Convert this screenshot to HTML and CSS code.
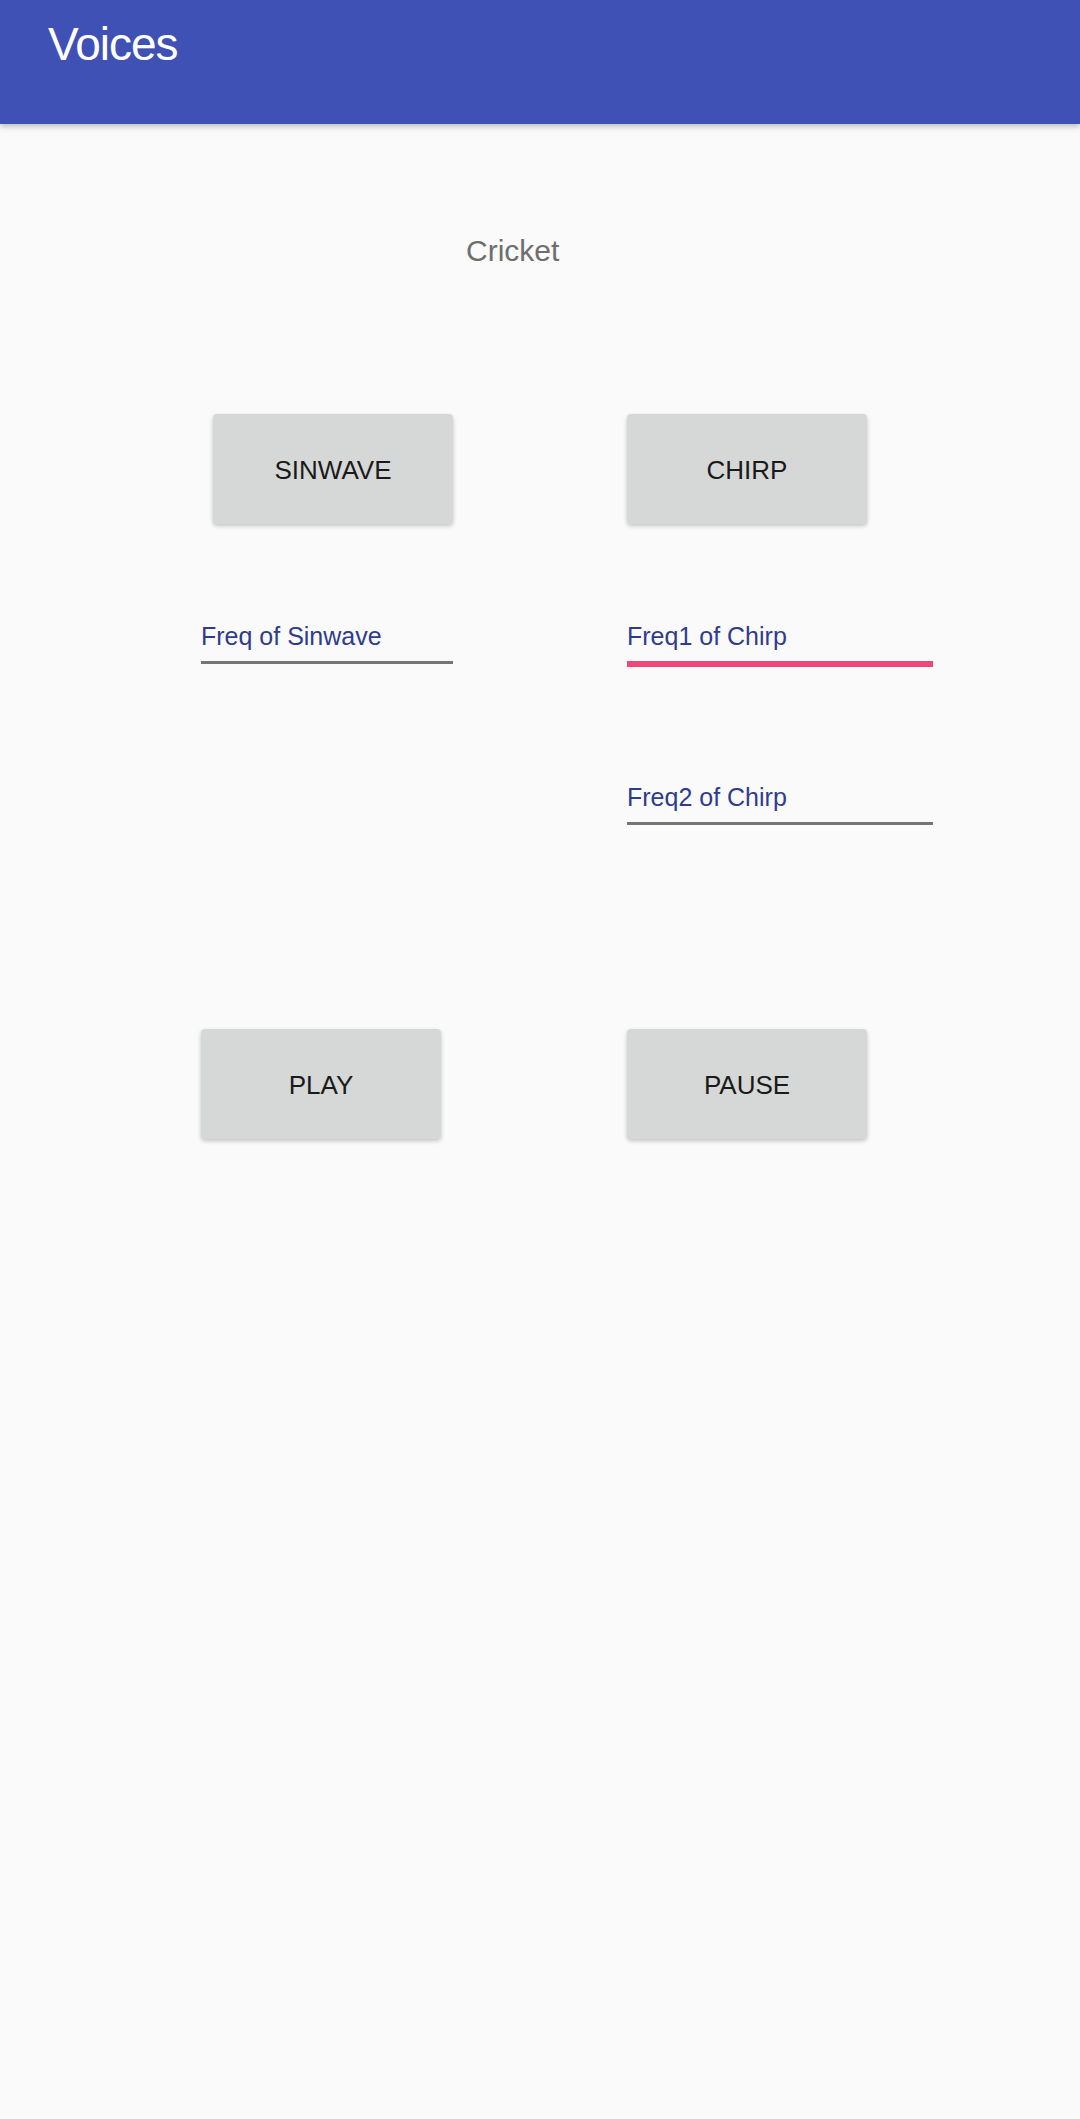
FILE: index.html
```html
<!DOCTYPE html>
<html>
<head>
<meta charset="utf-8">
<link rel="stylesheet" href="styles.css">
</head>
<body>
<header class="appbar">
  <h1 class="title">Voices</h1>
</header>
<main class="content">
  <div class="label-row">
    <span class="label">Cricket</span>
  </div>
  <div class="grid row-buttons">
    <button class="btn btn-shift">SINWAVE</button>
    <button class="btn">CHIRP</button>
  </div>
  <div class="grid row-inputs">
    <div class="field field-left"><span class="hint">Freq of Sinwave</span></div>
    <div class="field field-focus"><span class="hint">Freq1 of Chirp</span></div>
  </div>
  <div class="grid row-inputs2">
    <div></div>
    <div class="field"><span class="hint">Freq2 of Chirp</span></div>
  </div>
  <div class="grid row-buttons2">
    <button class="btn">PLAY</button>
    <button class="btn">PAUSE</button>
  </div>
</main>
</body>
</html>
```

FILE: styles.css
```css
html, body {
  margin: 0;
  padding: 0;
}
body {
  background: #fafafa;
  width: 1080px;
  min-height: 2119px;
  font-family: "Liberation Sans", Arial, sans-serif;
}
.appbar {
  height: 124px;
  background: #3f51b5;
  box-shadow: 0 2px 6px rgba(0, 0, 0, 0.28);
  box-sizing: border-box;
  padding: 18px 0 0 48px;
  position: relative;
}
.title {
  margin: 0;
  color: #ffffff;
  font-family: "Liberation Sans", sans-serif;
  font-weight: normal;
  font-size: 46px;
  line-height: 52px;
  letter-spacing: -1px;
}
.label-row {
  margin-top: 112px;
  padding-left: 466px;
  font-size: 30px;
  line-height: 30px;
}
.label {
  color: #6e6e6e;
}
.grid {
  display: grid;
  grid-template-columns: 426px 306px;
  padding-left: 201px;
  align-items: start;
}
.row-buttons {
  margin-top: 148px;
}
.row-inputs {
  margin-top: 97px;
}
.row-inputs2 {
  margin-top: 115px;
}
.row-buttons2 {
  margin-top: 204px;
}
.btn {
  width: 240px;
  height: 110px;
  border: none;
  border-radius: 4px;
  background: #d6d7d7;
  box-shadow: 0 2px 4px rgba(0, 0, 0, 0.22);
  font-family: "Liberation Sans", sans-serif;
  font-size: 26px;
  color: #1a1a1a;
  display: flex;
  align-items: center;
  justify-content: center;
  padding: 3px 0 0 0;
  box-sizing: border-box;
}
.btn-shift {
  margin-left: 12px;
}
.field {
  width: 306px;
  padding-bottom: 10px;
  border-bottom: 3px solid #757575;
  font-size: 25px;
  line-height: 30px;
}
.field-left {
  width: 252px;
}
.field-focus {
  border-bottom: 6px solid #ef4779;
}
.hint {
  color: #2f3c8e;
}
```
